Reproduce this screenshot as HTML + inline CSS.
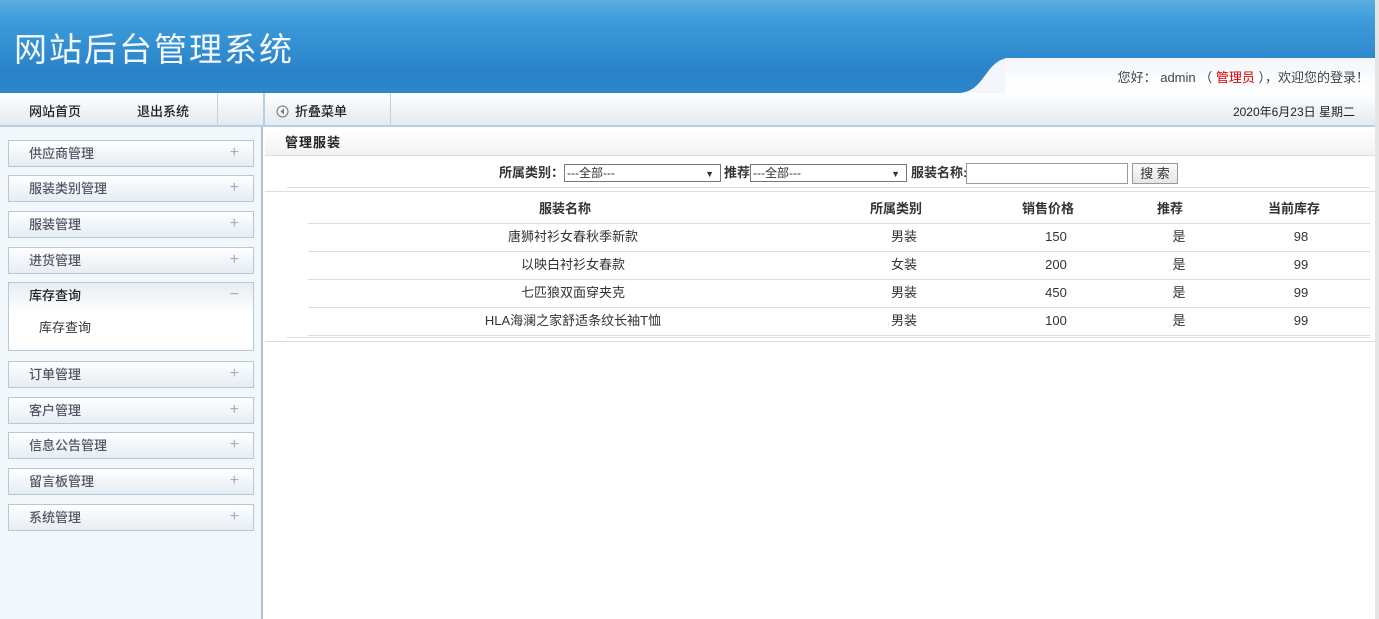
<!DOCTYPE html>
<html><head><meta charset="utf-8"><style>
*{margin:0;padding:0;box-sizing:border-box}
body{width:1379px;height:619px;overflow:hidden;background:#fff;font-family:"Liberation Sans","Noto Sans CJK SC",sans-serif;font-size:12px;line-height:16px;color:#333;position:relative}
.hdr{position:absolute;left:0;top:0;width:1375px;height:93px;background:linear-gradient(180deg,#5aaee2 0%,#3b9ad9 25%,#2a83c9 75%,#2c86cc 100%)}
.hdr .t{position:absolute;left:14px;top:27px;font-size:33px;line-height:40px;color:#f4f8fc;letter-spacing:2px;font-family:"Noto Sans CJK SC",sans-serif;font-weight:400}
.curve{position:absolute;left:1005px;top:58px;width:370px;height:36px;background:linear-gradient(#f3f7fb,#fff)}
.welcome{position:absolute;right:6px;top:70px;font-size:13px;color:#444}
.welcome b{color:#d00;font-weight:normal}
.sb{position:absolute;left:1375px;top:0;width:4px;height:619px;background:#e6e6e6}
.nav{position:absolute;left:0;top:93px;width:1375px;height:34px;background:linear-gradient(#fff,#e3eaf1);border-bottom:2px solid #b9cfe0}
.nav span{position:absolute;top:11px;font-size:13px;color:#222;font-weight:500}
.left{position:absolute;left:0;top:127px;width:263px;height:492px;background:#f2f7fb;border-right:2px solid #a8c3d6}
.m{position:absolute;left:8px;width:246px;height:27px;border:1px solid #b5c9d6;background:linear-gradient(#fff,#e6edf3)}
.m span{position:absolute;left:20px;top:5px;font-size:13px;color:#556;font-weight:500}
.m i{position:absolute;right:14px;top:4px;font-style:normal;font-size:16px;color:#aab}
.line{position:absolute;height:1px;background:#ddd}
.c{position:absolute;text-align:center;font-size:13px;transform:translateX(-50%);white-space:nowrap}
.h{font-weight:600;color:#333}
.sel{position:absolute;top:164px;height:18px;border:1px solid #777;background:#fff;font-size:12px;padding:0 2px;line-height:16px}
.sel:after{content:"▼";position:absolute;right:6px;top:1px;font-size:9px}
.lab{position:absolute;top:165px;font-size:13px;font-weight:600}
</style></head><body>
<div class="hdr"><div class="t">网站后台管理系统</div>
<svg style="position:absolute;left:940px;top:55px" width="70" height="40"><path d="M20 38 C45 36 45 6 68 3 L70 3 L70 40 L0 40Z" fill="#f3f7fb"/></svg>
<div class="curve"></div>
<div class="welcome">您好： admin （ <b>管理员</b> ），欢迎您的登录！</div></div>
<div class="sb"></div>
<div class="nav">
<span style="left:29px">网站首页</span><span style="left:137px">退出系统</span>
<div style="position:absolute;left:217px;top:0;width:1px;height:34px;background:#ccd"></div>
<div style="position:absolute;left:263px;top:0;width:2px;height:34px;background:#b9cfe0"></div>
<svg style="position:absolute;left:276px;top:12px" width="13" height="13"><circle cx="6.5" cy="6.5" r="5.5" fill="none" stroke="#777"/><path d="M8 3.5 L4.5 6.5 L8 9.5Z" fill="#777"/></svg><span style="left:295px">折叠菜单</span>
<div style="position:absolute;left:390px;top:0;width:1px;height:34px;background:#ccd"></div>
<span style="right:20px;font-size:12px;top:11px;font-weight:normal">2020年6月23日 星期二</span></div>
<div class="left">
<div class="m" style="top:13px"><span>供应商管理</span><i>+</i></div>
<div class="m" style="top:48px"><span>服装类别管理</span><i>+</i></div>
<div class="m" style="top:84px"><span>服装管理</span><i>+</i></div>
<div class="m" style="top:120px"><span>进货管理</span><i>+</i></div>
<div class="m" style="top:155px;height:69px;background:linear-gradient(#e6edf3,#fff 30px,#fff)"><span style="color:#222">库存查询</span><i>−</i><span style="left:30px;top:37px;color:#333;font-weight:normal">库存查询</span></div>
<div class="m" style="top:234px"><span>订单管理</span><i>+</i></div>
<div class="m" style="top:270px"><span>客户管理</span><i>+</i></div>
<div class="m" style="top:305px"><span>信息公告管理</span><i>+</i></div>
<div class="m" style="top:341px"><span>留言板管理</span><i>+</i></div>
<div class="m" style="top:377px"><span>系统管理</span><i>+</i></div>
</div>
<div style="position:absolute;left:265px;top:129px;width:1110px;height:27px;background:linear-gradient(#fff,#f2f2f2);border-bottom:1px solid #ddd"><span style="position:absolute;left:20px;top:6px;font-size:13px;color:#222;letter-spacing:1px;font-weight:600">管理服装</span></div>
<span class="lab" style="left:499px">所属类别：</span>
<div class="sel" style="left:564px;width:157px">---全部---</div>
<span class="lab" style="left:724px">推荐</span>
<div class="sel" style="left:750px;width:157px">---全部---</div>
<span class="lab" style="left:911px">服装名称:</span>
<div style="position:absolute;left:966px;top:163px;width:162px;height:21px;border:1px solid #999;background:#fff"></div>
<div style="position:absolute;left:1132px;top:163px;width:46px;height:21px;border:1px solid #999;background:linear-gradient(#fafafa,#e5e5e5);font-size:13px;text-align:center;line-height:19px">搜 索</div>
<div class="line" style="left:287px;top:187px;width:1083px"></div>
<div class="line" style="left:265px;top:191px;width:1110px"></div>
<div class="c h" style="left:565px;top:201px">服装名称</div><div class="c h" style="left:896px;top:201px">所属类别</div><div class="c h" style="left:1048px;top:201px">销售价格</div><div class="c h" style="left:1170px;top:201px">推荐</div><div class="c h" style="left:1294px;top:201px">当前库存</div>
<div class="line" style="left:308px;top:223px;width:1062px"></div>
<div class="c" style="left:573px;top:229px">唐狮衬衫女春秋季新款</div><div class="c" style="left:904px;top:229px">男装</div><div class="c" style="left:1056px;top:229px">150</div><div class="c" style="left:1179px;top:229px">是</div><div class="c" style="left:1301px;top:229px">98</div>
<div class="line" style="left:308px;top:251px;width:1062px"></div>
<div class="c" style="left:573px;top:257px">以映白衬衫女春款</div><div class="c" style="left:904px;top:257px">女装</div><div class="c" style="left:1056px;top:257px">200</div><div class="c" style="left:1179px;top:257px">是</div><div class="c" style="left:1301px;top:257px">99</div>
<div class="line" style="left:308px;top:279px;width:1062px"></div>
<div class="c" style="left:573px;top:285px">七匹狼双面穿夹克</div><div class="c" style="left:904px;top:285px">男装</div><div class="c" style="left:1056px;top:285px">450</div><div class="c" style="left:1179px;top:285px">是</div><div class="c" style="left:1301px;top:285px">99</div>
<div class="line" style="left:308px;top:307px;width:1062px"></div>
<div class="c" style="left:573px;top:313px">HLA海澜之家舒适条纹长袖T恤</div><div class="c" style="left:904px;top:313px">男装</div><div class="c" style="left:1056px;top:313px">100</div><div class="c" style="left:1179px;top:313px">是</div><div class="c" style="left:1301px;top:313px">99</div>
<div class="line" style="left:308px;top:335px;width:1062px"></div>
<div class="line" style="left:287px;top:337px;width:1083px"></div>
<div class="line" style="left:265px;top:341px;width:1110px"></div>
</body></html>
